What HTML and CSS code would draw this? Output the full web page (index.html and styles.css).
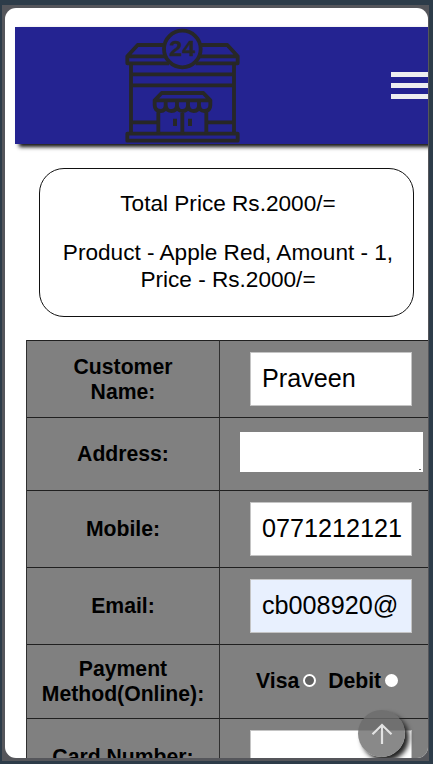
FILE: index.html
```
<!DOCTYPE html>
<html lang="en">
<head>
<meta charset="utf-8">
<title>Checkout</title>
<link rel="stylesheet" href="styles.css">
</head>
<body>
<div class="frame">
<main class="screen">
  <header class="bar">
    <svg class="shop" viewBox="30 24 345 345" fill="none" stroke="#272727" stroke-width="11.500" stroke-linejoin="round">
      <circle cx="202" cy="87" r="55"/>
      <path d="M148 75H68L37 109V130H162M256 75H337L368 109V130H242M37 109H150M254 109H368"/>
      <path d="M48 130V340M357 130V340M48 163H357M48 196H357M48 307H130M274 307H357"/>
      <rect x="37" y="341" width="331" height="21"/>
      <path d="M119 241L140 219H265L286 241ZM119 241V255Q119 273 137 273Q152 273 152 255V241M152 255Q153 273 169 273Q186 273 186 255V241M186 255Q187 273 202 273Q219 273 219 255V241M219 255Q220 273 236 273Q252 273 252 255V241M252 255Q253 273 268 273Q286 273 286 255V241M130 273V340M202 273V340M274 273V340"/>
      <path stroke-width="12" d="M180 296V318M225 296V318"/>
      <text class="hours" x="202" y="107" text-anchor="middle" textLength="78" lengthAdjust="spacingAndGlyphs">24</text>
    </svg>
    <div class="menu"><i></i><i></i><i></i></div>
  </header>
  <section class="summary">
    <p>Total Price Rs.2000/=</p>
    <p>Product - Apple Red, Amount - 1, Price - Rs.2000/=</p>
  </section>
  <form class="order">
    <div class="label first">Customer<br>Name:</div><div class="cell"><div class="field">Praveen</div></div>
    <div class="label">Address:</div><div class="cell area"><div class="textarea"></div></div>
    <div class="label">Mobile:</div><div class="cell"><div class="field">0771212121</div></div>
    <div class="label">Email:</div><div class="cell"><div class="field filled">cb008920@</div></div>
    <div class="label">Payment<br>Method(Online):</div>
    <div class="cell pay"><span>Visa</span><i class="radio"></i><span class="debit">Debit</span><i class="radio off"></i></div>
    <div class="label">Card Number:</div><div class="cell"><div class="field"></div></div>
  </form>
  <div class="top">
    <svg viewBox="0 0 22 22" fill="none" stroke="#e2e2e2" stroke-width="2.2"><path d="M11 21V2M1.5 11.2L11 2L20.500 11.200"/></svg>
  </div>
</main>
</div>
</body>
</html>
```
FILE: styles.css
```
* { box-sizing: border-box; }
body {
  margin: 0;
  height: 764px;
  padding: 5px 4px 3px 2px;
  overflow: hidden;
  background: #2d3c49;
  font-family: "Liberation Sans", Arial, sans-serif;
  color: #000;
}
.frame {
  width: 427px;
  height: 756px;
  padding: 3px 1px 3px 3px;
  background: #55565b;
}
.screen {
  position: relative;
  width: 423px;
  height: 750px;
  padding: 19px 0 0 10px;
  overflow: hidden;
  border-radius: 11px;
  background: #fff;
}
.bar {
  display: flex;
  align-items: center;
  justify-content: space-between;
  width: 417px;
  height: 117px;
  padding-left: 110px;
  background: #242391;
  box-shadow: 4px 3px 4px #111;
}
.shop { width: 115px; height: 115px; }
.hours {
  font: bold 68px "Liberation Sans", Arial, sans-serif;
  fill: #272727;
  stroke: #272727;
  stroke-width: 1;
}
.menu {
  display: flex;
  flex-direction: column;
  gap: 6.500px;
  width: 41px;
}
.menu i { height: 4.600px; background: #eeeef0; }
.summary {
  width: 375px;
  height: 149px;
  margin: 24px 0 0 24px;
  padding: 21px 17px 0 20px;
  border: 1px solid #111;
  border-radius: 25px;
  font-size: 22.600px;
  line-height: 27px;
  text-align: center;
}
.summary p { margin: 0 0 22px; }
.order {
  display: grid;
  grid-template-columns: 192px 210px;
  grid-template-rows: 77px 73px 77px 77px 74px 77px;
  width: 402px;
  margin: 23px 0 0 11px;
  border-left: 1px solid #303030;
  background: #808080;
  font-size: 21.200px;
  font-weight: bold;
  line-height: 25px;
}
.label, .cell {
  display: flex;
  align-items: center;
  border-top: 1px solid #202020;
}
.label {
  justify-content: center;
  padding-bottom: 2px;
  text-align: center;
}
.first { padding-top: 2px; }
.cell {
  padding-left: 30px;
  border-left: 1px solid #303030;
}
.area { padding-left: 20px; }
.field {
  width: 162px;
  height: 54px;
  padding: 0 11px;
  overflow: hidden;
  border: 1px solid #c4c4c4;
  background: #fff;
  font-size: 25.200px;
  font-weight: normal;
  line-height: 51px;
  white-space: nowrap;
}
.filled { background: #e8f0fe; }
.textarea {
  width: 183px;
  height: 40px;
  margin-bottom: 4px;
  background: linear-gradient(#666, #666) right 2px bottom 2px / 2px 1px no-repeat, #fff;
}
.pay { padding-left: 36px; padding-bottom: 2px; }
.radio {
  width: 13px;
  height: 13px;
  margin: 0 0 0 4px;
  border: 2px solid #fff;
  border-radius: 50%;
  background: #606060;
}
.radio.off { background: #fff; }
.debit { margin-left: 12px; }
.top {
  position: absolute;
  left: 353px;
  top: 702px;
  display: flex;
  align-items: center;
  justify-content: center;
  width: 47px;
  height: 47px;
  border-radius: 50%;
  background: rgba(107, 107, 107, .8);
  box-shadow: 4px 4px 5px #222;
}
.top svg { width: 22px; height: 22px; }
```
